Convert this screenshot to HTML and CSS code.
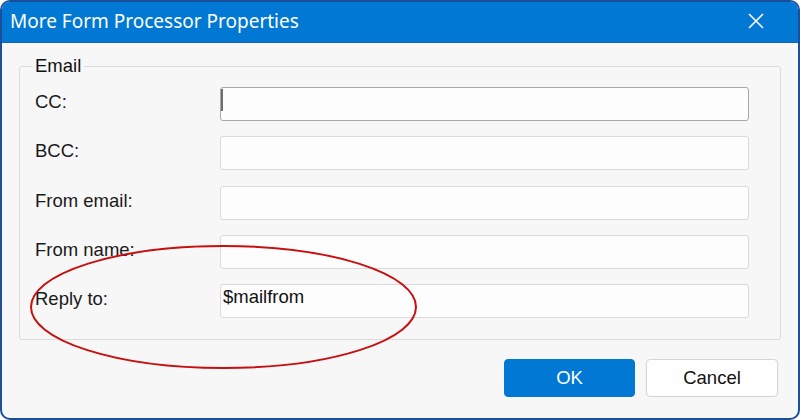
FILE: index.html
```
<!DOCTYPE html>
<html lang="en">
<head>
    <meta charset="UTF-8">
    <title>More Form Processor Properties</title>
    <link rel="stylesheet" href="styles.css">
</head>
<body>
    <div class="window">
        <div class="titlebar">
            <span class="title">More Form Processor Properties</span>
            <svg class="close" width="16" height="16" viewBox="0 0 16 16">
                <path d="M1 1 L15 15 M15 1 L1 15" stroke="#fff" stroke-width="1.6" fill="none"/>
            </svg>
        </div>
        <div class="content">
            <fieldset class="group">
                <legend>Email</legend>
                <div class="row">
                    <label>CC:</label>
                    <span class="field">
                        <input type="text" class="focused" value="">
                        <span class="caret"></span>
                    </span>
                </div>
                <div class="row">
                    <label>BCC:</label>
                    <span class="field"><input type="text" value=""></span>
                </div>
                <div class="row">
                    <label>From email:</label>
                    <span class="field"><input type="text" value=""></span>
                </div>
                <div class="row">
                    <label>From name:</label>
                    <span class="field"><input type="text" value=""></span>
                </div>
                <div class="row">
                    <label>Reply to:</label>
                    <span class="field"><input type="text" value="$mailfrom"></span>
                </div>
            </fieldset>
            <div class="buttons">
                <button class="primary">OK</button>
                <button>Cancel</button>
            </div>
        </div>
        <svg class="mark" width="800" height="420" viewBox="0 0 800 420">
            <ellipse cx="223.5" cy="307" rx="192.5" ry="61" fill="none" stroke="#c80f0f" stroke-width="2"/>
        </svg>
    </div>
</body>
</html>
```

FILE: styles.css
```
body {
    margin: 0;
    background: #fff;
    font-family: "Liberation Sans", Arial, sans-serif;
}
.window {
    position: relative;
    width: 800px;
    height: 420px;
    box-sizing: border-box;
    border: 2px solid #1b4f9a;
    border-radius: 10px;
    overflow: hidden;
    background: #f7f7f7;
    display: flex;
    flex-direction: column;
}
.titlebar {
    height: 40px;
    background: #0078d4;
    border-bottom: 1px solid #1a62b8;
    display: flex;
    align-items: center;
    justify-content: space-between;
    padding: 0 34px 0 8px;
}
.title {
    color: #fff;
    font-family: "Noto Sans", sans-serif;
    font-size: 19px;
    margin-top: -2px;
}
.close {
    margin-top: -2px;
}
.content {
    padding: 0 17px;
}
.group {
    margin: 13px 0 0;
    padding: 11px 31px 21px 15px;
    border: 1px solid #dcdcdc;
    border-radius: 3px;
    display: flex;
    flex-direction: column;
    gap: 15.3px;
}
.group legend {
    font-size: 18.5px;
    line-height: 20px;
    padding: 0 3px;
    margin-left: -3px;
    color: #111;
}
.row {
    display: flex;
    align-items: center;
}
.row label {
    width: 185px;
    font-size: 18.5px;
    color: #1a1a1a;
    margin-top: -4px;
}
.field {
    position: relative;
    flex: 1;
    display: flex;
}
.field input {
    flex: 1;
    height: 34px;
    box-sizing: border-box;
    border: 1px solid #dadada;
    border-radius: 3px;
    background: #fdfdfd;
    font-family: "Liberation Sans", Arial, sans-serif;
    font-size: 18.5px;
    color: #111;
    padding: 0 2px 9px;
    outline: none;
}
.field input.focused {
    border-color: #a9a9a9;
}
.caret {
    position: absolute;
    left: 1px;
    top: 2px;
    width: 2px;
    height: 22px;
    background: #6e6e6e;
}
.buttons {
    display: flex;
    justify-content: flex-end;
    gap: 11px;
    margin-top: 19px;
    padding-right: 3px;
}
.buttons button {
    width: 132px;
    height: 38px;
    border: 1px solid #d4d4d4;
    border-radius: 4px;
    background: #fefefe;
    font-family: "Liberation Sans", Arial, sans-serif;
    font-size: 18.5px;
    color: #111;
}
.buttons button.primary {
    width: 131px;
    background: #0078d4;
    border-color: #0078d4;
    color: #fff;
}
.mark {
    position: absolute;
    left: -2px;
    top: -2px;
    pointer-events: none;
}
```
